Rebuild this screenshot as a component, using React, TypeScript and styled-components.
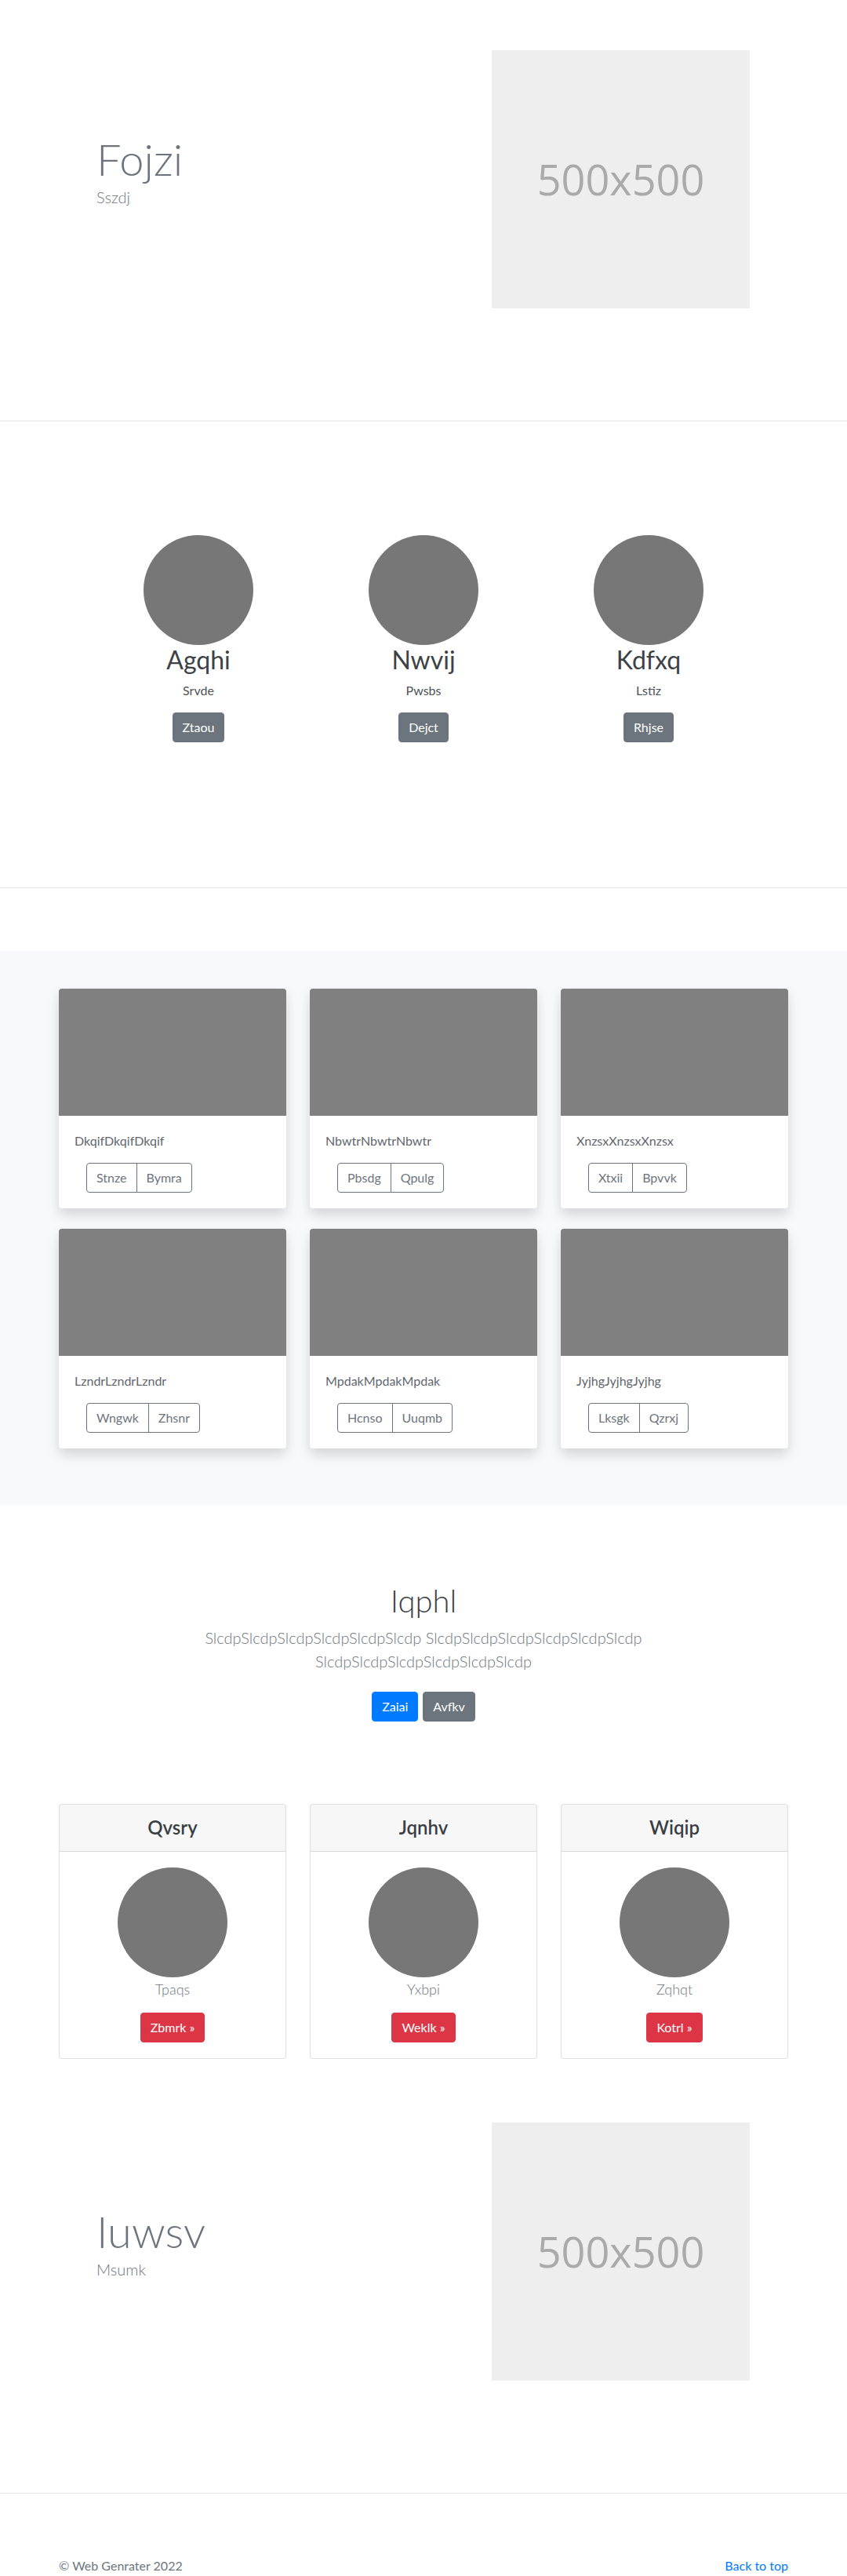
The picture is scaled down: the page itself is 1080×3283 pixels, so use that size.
import React from "react";
import styled, { createGlobalStyle } from "styled-components";

const GlobalStyle = createGlobalStyle`
  html, body { margin: 0; padding: 0; background: #ffffff; }
  body {
    font-family: Lato, Roboto, "Liberation Sans", Arial, sans-serif;
    font-size: 16px;
    line-height: 1.5;
    color: #212529;
  }
  *, *::before, *::after { box-sizing: border-box; }
`;

const Container = styled.div`
  width: 930px;
  margin: 0 auto;
`;

const Rule = styled.hr`
  margin: 0;
  border: 0;
  border-top: 1px solid rgba(0, 0, 0, 0.1);
  height: 0;
`;

/* ---------- Hero ---------- */
const Hero = styled.section<{ $top?: number }>`
  height: 536px;
  margin-top: ${(p) => p.$top ?? 0}px;
`;

const HeroInner = styled(Container)`
  display: flex;
  align-items: center;
  justify-content: space-between;
  padding: 64px 49px 0 48px;
`;

const HeroText = styled.div`
  padding-bottom: 22px;
`;

const Display = styled.h1`
  margin: 0;
  font-size: 56px;
  font-weight: 300;
  line-height: 1.2;
  color: #6c757d;
`;

const HeroLead = styled.p`
  margin: 0;
  font-size: 20px;
  font-weight: 300;
  line-height: 1.5;
  color: #6c757d;
`;

const Placeholder = styled.div`
  width: 329px;
  height: 329px;
  background: #eeeeee;
  color: #aaaaaa;
  display: flex;
  align-items: center;
  justify-content: center;
  font-family: "Open Sans", "Liberation Sans", sans-serif;
  font-size: 54px;
  font-weight: 400;
`;

/* ---------- Team ---------- */
const Team = styled.section`
  padding: 145px 0 185px;
  display: grid;
  grid-template-columns: repeat(3, 287px);
  justify-content: center;
`;

const Member = styled.div`
  display: flex;
  flex-direction: column;
  align-items: center;
`;

const Avatar = styled.div<{ $gap?: number }>`
  width: 140px;
  height: 140px;
  border-radius: 50%;
  background: #777777;
  margin-bottom: ${(p) => p.$gap ?? 0}px;
`;

const MemberName = styled.h2`
  margin: 0 0 8px;
  font-size: 32px;
  font-weight: 400;
  line-height: 1.2;
  color: #3d4247;
`;

const MemberRole = styled.p`
  margin: 0 0 16px;
  font-size: 16px;
  color: #4d5257;
`;

const Button = styled.a<{ $variant: "secondary" | "primary" | "danger" }>`
  display: inline-block;
  padding: 6px 12px;
  font-size: 16px;
  line-height: 24px;
  border-radius: 4px;
  border: 1px solid transparent;
  color: #ffffff;
  text-decoration: none;
  cursor: pointer;
  background: ${(p) =>
    p.$variant === "primary" ? "#007bff" : p.$variant === "danger" ? "#dc3545" : "#6c757d"};
  border-color: ${(p) =>
    p.$variant === "primary" ? "#007bff" : p.$variant === "danger" ? "#dc3545" : "#6c757d"};
`;

/* ---------- Album ---------- */
const Album = styled.section`
  margin-top: 80px;
  background: #f8f9fa;
  padding: 48px 0 72px;
`;

const CardGrid = styled(Container)<{ $rowGap: number }>`
  display: grid;
  grid-template-columns: repeat(3, 290px);
  column-gap: 30px;
  row-gap: ${(p) => p.$rowGap}px;
`;

const AlbumCard = styled.div`
  background: #ffffff;
  border-radius: 4px;
  box-shadow: 0 8px 16px rgba(0, 0, 0, 0.15);
  overflow: hidden;
`;

const Thumb = styled.div`
  height: 162px;
  background: #808080;
`;

const CardBody = styled.div<{ $center?: boolean }>`
  padding: 20px;
  display: flex;
  flex-direction: column;
  align-items: ${(p) => (p.$center ? "center" : "flex-start")};
`;

const CardText = styled.p`
  margin: 0 0 16px;
  font-size: 16px;
  color: #5f666d;
`;

const BtnGroup = styled.div`
  display: inline-flex;
  margin-left: 15px;
`;

const OutlineBtn = styled.button`
  font-family: inherit;
  font-size: 16px;
  line-height: 24px;
  padding: 6px 12px;
  background: transparent;
  color: #6c757d;
  border: 1px solid #6c757d;
  margin: 0;
  cursor: pointer;
  &:first-child {
    border-radius: 4px 0 0 4px;
  }
  &:last-child {
    border-radius: 0 4px 4px 0;
    margin-left: -1px;
  }
`;

/* ---------- Jumbotron ---------- */
const Jumbo = styled.section`
  padding: 98px 0 0;
  text-align: center;
`;

const JumboTitle = styled.h1`
  margin: 0 0 8px;
  font-size: 40px;
  font-weight: 300;
  line-height: 1.2;
  color: #3d4247;
`;

const JumboLead = styled.p`
  max-width: 610px;
  margin: 0 auto 16px;
  font-size: 20px;
  font-weight: 300;
  line-height: 1.5;
  color: #6c757d;
`;

const ButtonRow = styled.div`
  display: flex;
  justify-content: center;
  gap: 6px;
  padding: 8px 0;
`;

/* ---------- Pricing ---------- */
const Pricing = styled.section`
  padding-top: 97px;
`;

const PriceCard = styled.div`
  border: 1px solid rgba(0, 0, 0, 0.125);
  border-radius: 4px;
  background: #ffffff;
  overflow: hidden;
`;

const PriceHeader = styled.div`
  padding: 15px 20px;
  background: rgba(0, 0, 0, 0.03);
  border-bottom: 1px solid rgba(0, 0, 0, 0.125);
  text-align: center;
`;

const PriceTitle = styled.h4`
  margin: 0;
  font-size: 24px;
  font-weight: 600;
  line-height: 1.2;
  color: #3a3f44;
`;

const PriceLabel = styled.p`
  margin: 0 0 16px;
  font-size: 18px;
  font-weight: 300;
  line-height: 27px;
  color: #6c757d;
`;

/* ---------- Footer ---------- */
const Footer = styled.footer`
  padding: 80px 0 48px;
`;

const FooterInner = styled(Container)`
  display: flex;
  justify-content: space-between;
  align-items: baseline;
`;

const FooterText = styled.p`
  margin: 0;
  font-size: 16px;
  color: #6c757d;
`;

const FooterLink = styled.a`
  font-size: 16px;
  color: #007bff;
  text-decoration: none;
`;

const team = [
  { name: "Agqhi", role: "Srvde", btn: "Ztaou" },
  { name: "Nwvij", role: "Pwsbs", btn: "Dejct" },
  { name: "Kdfxq", role: "Lstiz", btn: "Rhjse" },
];

const albums = [
  { text: "DkqifDkqifDkqif", a: "Stnze", b: "Bymra" },
  { text: "NbwtrNbwtrNbwtr", a: "Pbsdg", b: "Qpulg" },
  { text: "XnzsxXnzsxXnzsx", a: "Xtxii", b: "Bpvvk" },
  { text: "LzndrLzndrLzndr", a: "Wngwk", b: "Zhsnr" },
  { text: "MpdakMpdakMpdak", a: "Hcnso", b: "Uuqmb" },
  { text: "JyjhgJyjhgJyjhg", a: "Lksgk", b: "Qzrxj" },
];

const prices = [
  { title: "Qvsry", label: "Tpaqs", btn: "Zbmrk »" },
  { title: "Jqnhv", label: "Yxbpi", btn: "Weklk »" },
  { title: "Wiqip", label: "Zqhqt", btn: "Kotrl »" },
];

function HeroBlock({ title, lead, top }: { title: string; lead: string; top?: number }) {
  return (
    <Hero $top={top}>
      <HeroInner>
        <HeroText>
          <Display>{title}</Display>
          <HeroLead>{lead}</HeroLead>
        </HeroText>
        <Placeholder>500x500</Placeholder>
      </HeroInner>
    </Hero>
  );
}

export default function App() {
  const slcdp = "SlcdpSlcdpSlcdpSlcdpSlcdpSlcdp";
  return (
    <>
      <GlobalStyle />
      <HeroBlock title="Fojzi" lead="Sszdj" />
      <Rule />
      <Team>
        {team.map((m) => (
          <Member key={m.name}>
            <Avatar />
            <MemberName>{m.name}</MemberName>
            <MemberRole>{m.role}</MemberRole>
            <Button $variant="secondary">{m.btn}</Button>
          </Member>
        ))}
      </Team>
      <Rule />
      <Album>
        <CardGrid $rowGap={26}>
          {albums.map((c) => (
            <AlbumCard key={c.text}>
              <Thumb />
              <CardBody>
                <CardText>{c.text}</CardText>
                <BtnGroup>
                  <OutlineBtn type="button">{c.a}</OutlineBtn>
                  <OutlineBtn type="button">{c.b}</OutlineBtn>
                </BtnGroup>
              </CardBody>
            </AlbumCard>
          ))}
        </CardGrid>
      </Album>
      <Jumbo>
        <JumboTitle>Iqphl</JumboTitle>
        <JumboLead>
          {slcdp} {slcdp} {slcdp}
        </JumboLead>
        <ButtonRow>
          <Button $variant="primary">Zaiai</Button>
          <Button $variant="secondary">Avfkv</Button>
        </ButtonRow>
      </Jumbo>
      <Pricing>
        <CardGrid $rowGap={0}>
          {prices.map((p) => (
            <PriceCard key={p.title}>
              <PriceHeader>
                <PriceTitle>{p.title}</PriceTitle>
              </PriceHeader>
              <CardBody $center>
                <Avatar $gap={2} />
                <PriceLabel>{p.label}</PriceLabel>
                <Button $variant="danger">{p.btn}</Button>
              </CardBody>
            </PriceCard>
          ))}
        </CardGrid>
      </Pricing>
      <HeroBlock title="Iuwsv" lead="Msumk" top={17} />
      <Rule />
      <Footer>
        <FooterInner>
          <FooterText>© Web Genrater 2022</FooterText>
          <FooterLink href="#">Back to top</FooterLink>
        </FooterInner>
      </Footer>
    </>
  );
}
